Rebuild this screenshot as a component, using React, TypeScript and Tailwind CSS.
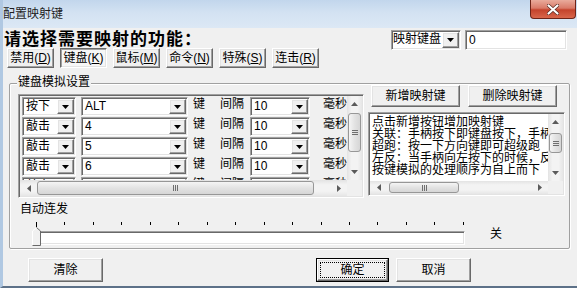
import React from "react";

const sunken =
  "border border-t-[#a0a0a0] border-l-[#a0a0a0] border-r-white border-b-white shadow-[inset_1px_1px_0_#696969,inset_-1px_-1px_0_#e3e3e3]";
const raised =
  "border border-t-white border-l-white border-r-[#696969] border-b-[#696969] shadow-[inset_-1px_-1px_0_#a0a0a0,inset_1px_1px_0_#e3e3e3]";
const pressed =
  "border border-t-[#696969] border-l-[#696969] border-r-white border-b-white shadow-[inset_1px_1px_0_#a0a0a0,inset_-1px_-1px_0_#e3e3e3]";

const DownTri = () => (
  <svg width="7" height="4" viewBox="0 0 7 4">
    <path d="M0 0h7L3.5 4z" fill="#000" />
  </svg>
);

const Arrow = ({ dir }: { dir: "up" | "down" | "left" | "right" }) => {
  const d = {
    up: "M0 4h7L3.5 0z",
    down: "M0 0h7L3.5 4z",
    left: "M4 0v7L0 3.5z",
    right: "M0 0v7L4 3.5z",
  }[dir];
  const vert = dir === "up" || dir === "down";
  return (
    <svg width={vert ? 7 : 4} height={vert ? 4 : 7} viewBox={vert ? "0 0 7 4" : "0 0 4 7"}>
      <path d={d} fill="#5b5b5b" />
    </svg>
  );
};

const Combo = ({ text, w, pl = "pl-[2px]" }: { text: string; w: string; pl?: string }) => (
  <div className={`flex h-[19px] bg-white p-[1px] ${sunken} ${w}`}>
    <span className={`flex-1 overflow-hidden whitespace-nowrap text-[12px] leading-[15px] ${pl}`}>{text}</span>
    <div className={`flex h-full w-[17px] shrink-0 items-center justify-center bg-[#f0f0f0] ${raised}`}>
      <DownTri />
    </div>
  </div>
);

const Btn = ({ children, w, h = "h-[20px]", down = false }: { children: React.ReactNode; w: string; h?: string; down?: boolean }) => (
  <div className={`flex items-center justify-center whitespace-nowrap bg-[#f0f0f0] text-[12px] leading-[14px] ${down ? pressed + " bg-[#f6f6f6]" : raised} ${w} ${h}`}>
    {children}
  </div>
);

const Key = ({ label, k }: { label: string; k: string }) => (
  <>
    {label}(<span className="underline">{k}</span>)
  </>
);

const HThumbGrip = () => (
  <div className="flex gap-[1px]">
    <div className="h-[6px] w-[1px] bg-[#6f6f6f]" />
    <div className="h-[6px] w-[1px] bg-[#6f6f6f]" />
    <div className="h-[6px] w-[1px] bg-[#6f6f6f]" />
  </div>
);

const VThumbGrip = () => (
  <div className="flex flex-col gap-[1px]">
    <div className="h-[1px] w-[6px] bg-[#6f6f6f]" />
    <div className="h-[1px] w-[6px] bg-[#6f6f6f]" />
    <div className="h-[1px] w-[6px] bg-[#6f6f6f]" />
  </div>
);

const HScroll = ({ ml, tw }: { ml: string; tw: string }) => (
  <div className="flex h-full flex-1 items-stretch bg-[linear-gradient(180deg,#e3e3e3,#f3f3f3_30%,#f3f3f3_70%,#e6e6e6)]">
    <div className="flex w-[17px] items-center justify-center">
      <Arrow dir="left" />
    </div>
    <div className="flex flex-1 items-stretch py-[1px]">
      <div
        className={`flex items-center justify-center rounded-[3px] border border-[#979797] bg-[linear-gradient(180deg,#f5f5f5,#e3e3e3_50%,#d6d6d6)] ${ml} ${tw}`}
      >
        <HThumbGrip />
      </div>
    </div>
    <div className="flex w-[17px] items-center justify-center">
      <Arrow dir="right" />
    </div>
  </div>
);

const VScroll = ({ mt, th }: { mt: string; th: string }) => (
  <div className="flex h-full w-[15px] flex-col bg-[linear-gradient(90deg,#e3e3e3,#f3f3f3_30%,#f3f3f3_70%,#e6e6e6)]">
    <div className="flex h-[16px] items-center justify-center">
      <Arrow dir="up" />
    </div>
    <div
      className={`mx-[1px] flex items-center justify-center rounded-[3px] border border-[#979797] bg-[linear-gradient(90deg,#f5f5f5,#e3e3e3_50%,#d6d6d6)] ${mt} ${th}`}
    >
      <VThumbGrip />
    </div>
    <div className="mt-auto flex h-[16px] items-center justify-center">
      <Arrow dir="down" />
    </div>
  </div>
);

const rows = [
  { a: "按下", b: "ALT" },
  { a: "敲击", b: "4" },
  { a: "敲击", b: "5" },
  { a: "敲击", b: "6" },
  { a: "敲击", b: "7" },
];

const notes = [
  "点击新增按钮增加映射键",
  "关联：手柄按下即键盘按下，手柄松开即键盘松开",
  "超跑：按一下方向键即可超级跑",
  "左反：当手柄向左按下的时候，反向输出",
  "按键模拟的处理顺序为自上而下",
];

const ticks = Array.from({ length: 16 }, (_, i) => i);

export default function App() {
  return (
    <div className="flex h-[288px] w-[577px] flex-col overflow-hidden border-b-2 border-l-[3px] border-b-[#5d7188] border-l-[#b0c8e2] bg-[#f0f0f0] font-['Liberation_Sans','Noto_Sans_CJK_SC',sans-serif] text-black">
      {/* title bar */}
      <div className="flex h-[28px] items-start justify-between bg-[linear-gradient(180deg,#c2d6ec_0%,#d3e2f2_45%,#dce8f5_100%)]">
        <span className="mt-[7px] text-[12px] leading-[14px] text-[#1e1e1e]">配置映射键</span>
        <div className="mr-[1px] flex h-[19px] w-[46px] items-center justify-center rounded-b-[4px] border border-t-0 border-[#6e2418] bg-[linear-gradient(180deg,#e9ab9c_0%,#d97a68_45%,#c4432c_55%,#d8664b_100%)]">
          <svg width="12" height="11" viewBox="0 0 12 11">
            <path d="M1.5 1.5l9 8M10.5 1.5l-9 8" stroke="#5a2a22" strokeWidth="3.6" strokeLinecap="round" />
            <path d="M1.5 1.5l9 8M10.5 1.5l-9 8" stroke="#fff" strokeWidth="2.2" strokeLinecap="round" />
          </svg>
        </div>
      </div>

      {/* header */}
      <div className="mt-[2px] flex h-[18px] items-start justify-between pl-[1px] pr-[10px]">
        <span className="mt-[1px] whitespace-nowrap text-[17px] font-bold leading-[17px] tracking-[1px]">请选择需要映射的功能：</span>
        <div className="flex gap-[4px]">
          <Combo text="映射键盘" w="w-[70px] h-[20px]" pl="pl-0" />
          <div className={`h-[20px] w-[102px] bg-white pl-[3px] text-[12px] leading-[18px] ${sunken}`}>0</div>
        </div>
      </div>

      {/* mode buttons */}
      <div className="ml-[4px] flex gap-[6px]">
        <Btn w="w-[47px]"><Key label="禁用" k="D" /></Btn>
        <Btn w="w-[47px]" down><Key label="键盘" k="K" /></Btn>
        <Btn w="w-[47px]"><Key label="鼠标" k="M" /></Btn>
        <Btn w="w-[47px]"><Key label="命令" k="N" /></Btn>
        <Btn w="w-[47px]"><Key label="特殊" k="S" /></Btn>
        <Btn w="w-[47px]"><Key label="连击" k="R" /></Btn>
      </div>

      {/* group box */}
      <div className="relative ml-[6px] mt-[15px] w-[561px] rounded-[2px] border border-[#a0a0a0] shadow-[inset_1px_1px_0_#fff,1px_1px_0_#fff]">
        <span className="absolute left-[7px] top-[-10px] bg-[#f0f0f0] px-[1px] text-[12px] leading-[16px]">键盘模拟设置</span>

        <div className="flex h-[114px] items-start pl-[8px]">
          {/* key rows panel */}
          <div className={`mt-[10px] flex h-[104px] w-[346px] flex-col p-[1px] ${sunken}`}>
            <div className="flex h-[84px]">
              <div className="h-full w-[327px] overflow-hidden">
                {rows.map((r, i) => (
                  <div key={i} className="flex h-[20px] items-start whitespace-nowrap">
                    <div className="ml-[2px] mt-[1px] shrink-0">
                      <Combo text={r.a} w="w-[54px]" />
                    </div>
                    <div className="ml-[5px] mt-[1px] shrink-0">
                      <Combo text={r.b} w="w-[107px]" />
                    </div>
                    <span className="ml-[5px] mt-[1px] shrink-0 text-[12px] leading-[14px]">键</span>
                    <span className="ml-[15px] mt-[1px] shrink-0 text-[12px] leading-[14px]">间隔</span>
                    <div className="ml-[6px] mt-[1px] shrink-0">
                      <Combo text="10" w="w-[60px]" />
                    </div>
                    <span className="ml-[13px] mt-[1px] shrink-0 text-[12px] leading-[14px]">毫秒</span>
                  </div>
                ))}
              </div>
              <VScroll mt="mt-[1px]" th="h-[39px]" />
            </div>
            <div className="flex h-[16px]">
              <HScroll ml="ml-0" tw="w-[277px]" />
              <div className="w-[15px] bg-[#f0f0f0]" />
            </div>
          </div>

          {/* right column */}
          <div className="ml-[4px] mt-[1px] flex w-[197px] flex-col">
            <div className="ml-[3px] flex gap-[8px]">
              <Btn w="w-[89px]" h="h-[22px]">新增映射键</Btn>
              <Btn w="w-[89px]" h="h-[22px]">删除映射键</Btn>
            </div>
            <div className={`mt-[5px] flex h-[84px] flex-col bg-white p-[1px] ${sunken}`}>
              <div className="flex h-[67px]">
                <div className="w-[178px] overflow-hidden pl-[2px] pt-[2px] text-[12px] leading-[12px]">
                  {notes.map((n, i) => (
                    <div key={i} className="whitespace-nowrap">{n}</div>
                  ))}
                </div>
                <VScroll mt="mt-[3px]" th="h-[20px]" />
              </div>
              <div className="flex h-[13px]">
                <HScroll ml="ml-[2px]" tw="w-[70px]" />
                <div className="w-[15px] bg-[#f0f0f0]" />
              </div>
            </div>
          </div>
        </div>

        <div className="h-[18px] pl-[10px] pt-[4px] text-[12px] leading-[14px]">自动连发</div>

        {/* slider */}
        <div className="flex h-[32px] items-start pl-[22px]">
          <div className="relative h-full w-[433px]">
            <div className="ml-[4px] mt-[6px] flex w-[428px] justify-between">
              {ticks.map((t) => (
                <div key={t} className={`w-[1px] bg-black ${t === 0 ? "h-[5px]" : "h-[3px]"}`} />
              ))}
            </div>
            <div className={`ml-[1px] mt-[4px] h-[14px] w-[432px] bg-white ${sunken}`} />
            <svg className="absolute left-0 top-[11px]" width="9" height="19" viewBox="0 0 9 19">
              <path d="M0.5 18.5V4L4.5 0.5L8.5 4V18.5z" fill="#f0f0f0" />
              <path d="M0.5 18.5V4L4.5 0.5" stroke="#fff" fill="none" />
              <path d="M4.5 0.5L8.5 4V18.5H0.5" stroke="#696969" fill="none" />
            </svg>
          </div>
          <span className="ml-[25px] mt-[11px] text-[12px] leading-[14px]">关</span>
        </div>
      </div>

      {/* bottom buttons */}
      <div className="ml-[25px] mt-[9px] flex">
        <Btn w="w-[75px]" h="h-[24px]">清除</Btn>
        <div className="ml-[213px] flex h-[24px] w-[73px] border border-black">
          <div className={`flex flex-1 items-center justify-center bg-[#f0f0f0] text-[12px] leading-[14px] outline-1 outline-offset-[-4px] outline-dotted outline-black ${raised}`}>
            确定
          </div>
        </div>
        <div className="ml-[7px]">
          <Btn w="w-[75px]" h="h-[24px]">取消</Btn>
        </div>
      </div>
    </div>
  );
}
